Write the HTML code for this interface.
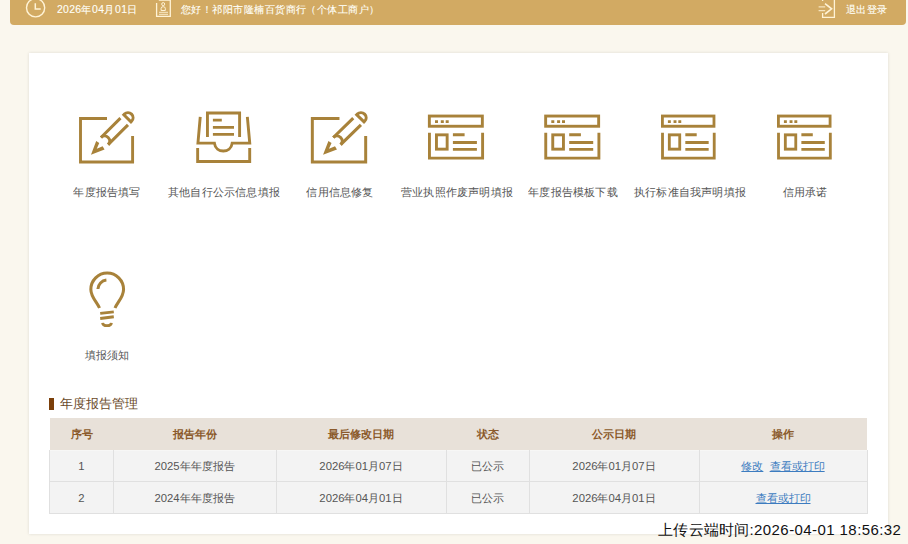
<!DOCTYPE html>
<html><head><meta charset="utf-8">
<style>
html,body{margin:0;padding:0}
body{width:908px;height:544px;overflow:hidden;position:relative;background:#FAF7EE;font-family:"Liberation Sans",sans-serif;}
.abs{position:absolute;white-space:nowrap}
#hdr{position:absolute;left:10px;top:-6px;width:895.5px;height:30.5px;background:#D2AA63;border-radius:4px}
.ht{position:absolute;color:#FFFFF8;-webkit-text-stroke:0.12px #FFFFF8;font-size:11px;line-height:12px;top:3px;white-space:nowrap;transform:scale(0.95);transform-origin:0 0}
#card{position:absolute;left:29px;top:53px;width:859px;height:481px;background:#fff;box-shadow:0 0 3px rgba(0,0,0,.12)}
.lab{position:absolute;width:160px;margin-left:-80px;text-align:center;color:#555;font-size:12px;line-height:14px;white-space:nowrap;transform:scale(0.935);transform-origin:50% 50%}
#icons{position:absolute;left:0;top:0}
.th{position:absolute;top:419px;height:31px;line-height:31px;text-align:center;color:#8B5A2B;font-weight:bold;font-size:11.3px}
.td{position:absolute;height:32px;line-height:32px;text-align:center;color:#555;font-size:11.3px}
.ln{position:absolute;background:#E0E0E0}
a{color:#3D7CC0;text-decoration:underline}
</style></head><body>
<div id="hdr"></div>
<svg class="abs" style="left:0;top:0" width="908" height="30" viewBox="0 0 908 30">
 <g fill="none" stroke="#FFF3D6" stroke-width="1.3">
  <circle cx="35.6" cy="7.8" r="9.1" stroke-width="1.4"/>
  <path d="M35.3 3.3 V9 H40.7" stroke-width="1.5"/>
  <path d="M156.6 3 V16.3 H170.3 V-1 M158.8 0 H170.3"/>
  <path d="M159 12.3 H168 M159 14.3 H168" stroke-width="0.9"/>
  <circle cx="163.2" cy="4.1" r="1.5" stroke-width="1"/>
  <path d="M161.1 10.5 V8.3 Q161.1 6.7 163.2 6.7 Q165.3 6.7 165.3 8.3 V10.5 Z" stroke-width="1"/>
  <path d="M822.6 -1 V1 M822.6 13 V17.3 H834.4 V-1"/>
  <path d="M818.6 6.9 H825.2 M818.6 10.6 H825.2" stroke-width="1.1" stroke-opacity="0.8"/>
  <path d="M825 3.6 L831.6 8.8 L825 14" stroke-width="1.6"/>
 </g>
</svg>
<div class="ht" style="left:57px;letter-spacing:0.3px">2026年04月01日</div>
<div class="ht" style="left:181px">您好！祁阳市隆楠百货商行（个体工商户）</div>
<div class="ht" style="left:845.5px">退出登录</div>

<div id="card"></div>

<svg id="icons" width="908" height="544" viewBox="0 0 908 544">
 <defs>
  <g id="pen">
   <path d="M107 118.5 H80.5 V162 H132.6 V136"/>
   <g transform="translate(90.4 154.5) rotate(-45)">
    <path d="M0.3 0.5 L13.6 -5.4 L14.4 -1.9 L8.5 0.5 L14.4 2.9 L13.6 6.4 Z" fill="#A8823A" stroke="none"/>
    <path d="M19.5 -4.5 H47 M19.5 5.6 H47.5" stroke-width="3"/>
    <path d="M19.5 -4.5 A5.05 5.05 0 0 1 19.5 5.6" stroke-width="3"/>
    <path d="M51.8 -4.5 L52.6 -4.5 A5.05 5.05 0 0 1 52.6 5.6 L51.8 5.6 Z" stroke-width="3"/>
   </g>
  </g>
  <g id="doc">
   <rect x="429.35" y="116.05" width="53" height="10.2"/>
   <path d="M435 121.6 H438 M440.8 121.6 H443.8 M445.7 121.6 H448.7"/>
   <path d="M429.45 132.8 V158.1 H482.6 V132.8"/>
   <rect x="436.45" y="134.85" width="10.7" height="14.3"/>
   <path d="M452.9 134.8 H464.6 M452.9 142.5 H476.9 M452.9 149.4 H476.9"/>
  </g>
 </defs>
 <g fill="none" stroke="#A8823A" stroke-width="2.9" stroke-linecap="butt">
  <use href="#pen"/>
  <use href="#pen" transform="translate(310.9 0) scale(1.024 1) translate(-79.1 0)"/>
  <use href="#doc"/>
  <use href="#doc" transform="translate(116.3 0)"/>
  <use href="#doc" transform="translate(661 0) scale(0.973 1) translate(-427.9 0)"/>
  <use href="#doc" transform="translate(777 0) scale(0.975 1) translate(-427.9 0)"/>
  <!-- tray -->
  <path d="M207.45 137 V112.95 H239.6 V137"/>
  <path d="M212.9 120.15 H221.8 M212.9 127.4 H234 M212.9 134.4 H234"/>
  <path d="M200.25 116.9 L197.95 143.1 H214.4 C215.8 153.7 230.8 153.7 232.2 143.1 H249.75 L247.35 116.9"/>
  <path d="M197.65 148.1 V161.45 H249.7 V148.1"/>
  <!-- bulb -->
  <path d="M99.5 308 C97 302 90.85 297 90.85 289.4 A16.35 16.35 0 0 1 123.55 289.4 C123.55 297 117.5 302 115 308" stroke-width="3.05"/>
  <path d="M97.9 289 A9.4 9.4 0 0 1 106.4 280.1" stroke-width="3"/>
  <path d="M100.2 313.4 L113.8 311.9 M100.2 318.5 L113.8 316.75" stroke-width="2.8"/>
  <path d="M102.6 322.8 C102.9 326.6 111.1 326.6 111.4 322.8" stroke-width="2.8"/>
 </g>
</svg>

<div class="lab" style="left:107px;top:185px">年度报告填写</div>
<div class="lab" style="left:223.5px;top:185px">其他自行公示信息填报</div>
<div class="lab" style="left:340px;top:185px">信用信息修复</div>
<div class="lab" style="left:456.5px;top:185px">营业执照作废声明填报</div>
<div class="lab" style="left:573px;top:185px">年度报告模板下载</div>
<div class="lab" style="left:689.5px;top:185px">执行标准自我声明填报</div>
<div class="lab" style="left:805px;top:185px">信用承诺</div>
<div class="lab" style="left:107px;top:348px">填报须知</div>

<div class="abs" style="left:49px;top:398px;width:5px;height:11.5px;background:#7B3F0A"></div>
<div class="abs" style="left:60px;top:395px;font-size:13px;line-height:17px;color:#6A4A2A">年度报告管理</div>

<div class="abs" style="left:50px;top:418px;width:817px;height:32px;background:#E8E1D9"></div>
<div class="abs" style="left:49px;top:450px;width:819px;height:63px;background:#F3F3F3"></div><div class="abs" style="left:50px;top:450px;width:817px;height:1px;background:#F7F7F6"></div>
<div class="ln" style="left:49px;top:481px;width:819px;height:1px"></div>
<div class="ln" style="left:49px;top:513px;width:819px;height:1px"></div>
<div class="ln" style="left:49px;top:450px;width:1px;height:64px"></div>
<div class="ln" style="left:113px;top:450px;width:1px;height:64px"></div>
<div class="ln" style="left:276px;top:450px;width:1px;height:64px"></div>
<div class="ln" style="left:446px;top:450px;width:1px;height:64px"></div>
<div class="ln" style="left:529px;top:450px;width:1px;height:64px"></div>
<div class="ln" style="left:699px;top:450px;width:1px;height:64px"></div>
<div class="ln" style="left:867px;top:450px;width:1px;height:64px"></div>

<div class="th" style="left:50px;width:63px">序号</div>
<div class="th" style="left:113px;width:163px">报告年份</div>
<div class="th" style="left:276px;width:170px">最后修改日期</div>
<div class="th" style="left:446px;width:83px">状态</div>
<div class="th" style="left:529px;width:170px">公示日期</div>
<div class="th" style="left:699px;width:168px">操作</div>

<div class="td" style="top:450px;left:50px;width:63px">1</div>
<div class="td" style="top:450px;left:113px;width:163px">2025年年度报告</div>
<div class="td" style="top:450px;left:276px;width:170px">2026年01月07日</div>
<div class="td" style="top:450px;left:446px;width:83px">已公示</div>
<div class="td" style="top:450px;left:529px;width:170px">2026年01月07日</div>
<div class="td" style="top:450px;left:699px;width:168px"><a>修改</a>&nbsp;&nbsp;<a>查看或打印</a></div>

<div class="td" style="top:482px;left:50px;width:63px">2</div>
<div class="td" style="top:482px;left:113px;width:163px">2024年年度报告</div>
<div class="td" style="top:482px;left:276px;width:170px">2026年04月01日</div>
<div class="td" style="top:482px;left:446px;width:83px">已公示</div>
<div class="td" style="top:482px;left:529px;width:170px">2026年04月01日</div>
<div class="td" style="top:482px;left:699px;width:168px"><a>查看或打印</a></div>

<div class="abs" style="left:658px;top:520px;font-size:15px;line-height:20px;color:#111"><span style="letter-spacing:0.25px">上传云端时间</span><span style="letter-spacing:0.42px">:2026-04-01 18:56:32</span></div>
</body></html>
